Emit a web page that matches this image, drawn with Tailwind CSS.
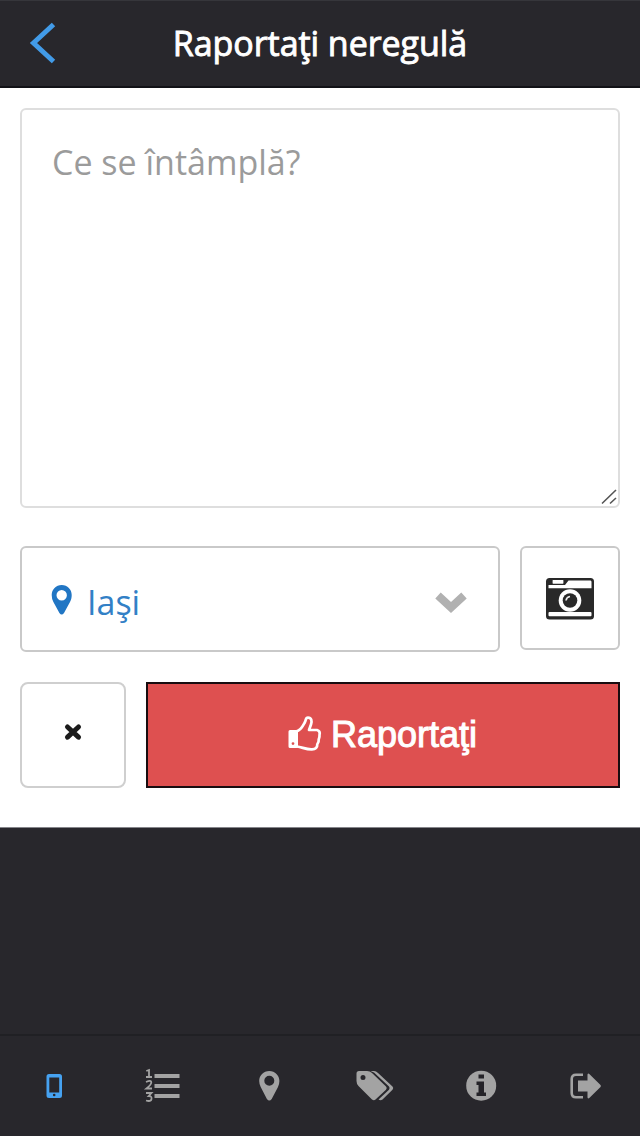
<!DOCTYPE html>
<html lang="en">
<head>
<meta charset="utf-8">
<title>Raportaţi neregulă</title>
<script src="https://cdn.jsdelivr.net/npm/@tailwindcss/browser@4"></script>
</head>
<body class="w-[640px] h-[1136px] overflow-hidden bg-[#28272c] flex flex-col font-['Open_Sans',sans-serif]">
<header class="h-[88px] shrink-0 grid grid-cols-[88px_1fr_88px] items-center border-t border-[#36363b] border-b-2 border-b-[#121217]">
  <svg class="w-[88px] h-[85px]" viewBox="0 1 88 85" fill="none"><path d="M53.5 24.500L33.500 43L53.500 61.500" stroke="#429be8" stroke-width="5"/></svg>
  <h1 class="text-center text-white text-[34px] leading-[85px] font-normal whitespace-nowrap tracking-[-0.05px] [-webkit-text-stroke:0.9px_white]">Raportaţi neregulă</h1>
</header>
<main class="h-[740px] shrink-0 bg-white px-5 pt-5 flex flex-col border-b border-[#85858a]">
  <div class="relative h-[400px] shrink-0 rounded-md border-2 border-[#dedede] px-[30px] pt-[28px] text-[34px] leading-[48px] text-[#9b9b9b]">
    <span class="whitespace-nowrap">Ce se întâmplă?</span>
    <svg class="absolute right-0 bottom-0 w-5 h-5" viewBox="598 486 20 20" stroke="#555" stroke-width="1.600"><path d="M602 503.500L616 490M610 503.500L616 498"/></svg>
  </div>
  <div class="mt-[38px] flex gap-5 items-start">
    <div class="w-[480px] h-[106px] rounded-md border-2 border-[#c9c9c9] flex items-center text-[#3280c6] text-[34px]">
      <svg class="w-[65px] h-[102px] shrink-0" viewBox="22 548 65 102"><path fill="#2176c4" fill-rule="evenodd" d="M61.700 585C67.500 585 71.700 589.500 71.700 595C71.700 598 71 600 70 602L64 613Q61.700 616 59.400 613L53.400 602Q51.700 599 51.700 595C51.700 589.500 56 585 61.700 585ZM61.700 590A5.200 5.200 0 1 0 61.700 600.400A5.200 5.200 0 1 0 61.700 590Z"/></svg>
      <span class="grow leading-[48px] pt-1.5">Iaşi</span>
      <svg class="w-[65px] h-[102px] shrink-0" viewBox="433 548 65 102"><path d="M438 595.500L451 607.500L464 595.500" fill="none" stroke="#b1b1b1" stroke-width="8"/></svg>
    </div>
    <div class="w-[100px] h-[104px] rounded-md border-2 border-[#c9c9c9]">
      <svg class="w-24 h-[100px]" viewBox="522 548 96 100"><rect x="546" y="578" width="48" height="41.500" rx="3.500" fill="#292929"/><path d="M548.500 585H565L568.500 580.500H590.500Q591.500 580.500 591.500 582V588.300H548.500Z" fill="#fff"/><rect x="552" y="579.300" width="12" height="5" rx="1" fill="#fff" stroke="#292929" stroke-width="1.200"/><rect x="548.500" y="612" width="43" height="4.200" rx="1" fill="#fff"/><circle cx="570" cy="600.500" r="11.300" fill="#fff"/><circle cx="570" cy="600.500" r="7.300" fill="#292929"/><path d="M566 600.500Q566.500 597 570 596.500" fill="none" stroke="#eee" stroke-width="1.700"/></svg>
    </div>
  </div>
  <div class="mt-[30px] flex gap-5">
    <div class="w-[106px] h-[106px] rounded-lg border-2 border-[#cfcfcf]">
      <svg class="w-[102px] h-[102px]" viewBox="22 684 102 102"><path d="M67.500 727L78.500 737.200M78.500 727L67.500 737.200" stroke="#1b1b1b" stroke-width="5" stroke-linecap="round"/></svg>
    </div>
    <div class="w-[474px] h-[106px] border-2 border-[#180c10] bg-[#de5050] flex items-center text-white">
      <svg class="w-[183px] h-[102px] shrink-0" viewBox="148 684 183 102"><path fill="#fff" fill-rule="evenodd" d="M290 730H296.500Q298 730 298 731.500V746.500Q298 748 296.500 748H290Q288.500 748 288.500 746.500V731.500Q288.500 730 290 730ZM293 742.200A1.400 1.400 0 1 0 293 745A1.400 1.400 0 1 0 293 742.200Z"/><path d="M296.500 731.300C301 730.500 303 725.500 305 722C306 720 305.500 717.700 308 717.700C311.500 717.700 312.200 721 311 724.500L309 730H317Q320.500 731 319.500 735C319.700 737 319 738.500 318.700 739.500C319 741.500 318.200 743 317.300 744.200C317.500 747.500 315.500 749.400 312 749.400C306 749.700 302 747 297 746.500" fill="none" stroke="#fff" stroke-width="2.700" stroke-linejoin="round"/></svg>
      <span class="font-['Liberation_Sans',sans-serif] text-[36px] leading-[48px] whitespace-nowrap [-webkit-text-stroke:1px_white]">Raportaţi</span>
    </div>
  </div>
</main>
<nav class="mt-auto h-[102px] shrink-0 border-t-2 border-[#202024] flex fill-[#a3a3a3]">
  <svg class="w-[107px] h-[100px]" viewBox="0 1036 107 100"><path fill="#46a2f1" fill-rule="evenodd" d="M49 1074H59.500Q62 1074 62 1076.500V1095.500Q62 1098 59.500 1098H49Q46.500 1098 46.500 1095.500V1076.500Q46.500 1074 49 1074ZM49.300 1077.600V1092.600H59.200V1077.600ZM54.200 1093.700A1.300 1.300 0 1 0 54.200 1096.300A1.300 1.300 0 1 0 54.200 1093.700Z"/></svg>
  <svg class="w-[106px] h-[100px]" viewBox="107 1036 106 100"><path d="M154.500 1074H179.500V1078H154.500ZM154.500 1084H179.500V1088H154.500ZM154.500 1094H179.500V1098H154.500Z"/><path d="M146.300 1071L149 1070V1076.500M146 1077H152M146 1082Q151.500 1079.700 151.300 1082.500Q151 1085 146.500 1088.500H152M146 1093H151.500L148.700 1096Q152 1096 151.500 1099Q151 1102 146 1100.500" fill="none" stroke="#a3a3a3" stroke-width="1.800"/></svg>
  <svg class="w-[107px] h-[100px]" viewBox="213 1036 107 100"><path fill-rule="evenodd" d="M269.300 1071C275 1071 279.400 1075.500 279.400 1081Q279.400 1084 278 1087L271.700 1099Q269.300 1102 266.900 1099L260.700 1087Q259.200 1084 259.200 1081C259.200 1075.500 263.500 1071 269.300 1071ZM269.300 1075.800A5 5 0 1 0 269.300 1085.800A5 5 0 1 0 269.300 1075.800Z"/></svg>
  <svg class="w-[107px] h-[100px]" viewBox="320 1036 107 100"><path fill-rule="evenodd" d="M359 1071H367Q370 1071 372 1073L386 1086.500Q387.500 1088 386 1089.700L375.500 1099.500Q374 1101 372 1099.500L358.500 1086Q356.500 1084 356.500 1081V1073.500Q356.500 1071 359 1071ZM363 1075A2.500 2.500 0 1 0 363 1080A2.500 2.500 0 1 0 363 1075Z"/><path d="M370.500 1071H374Q376 1071 378 1073L392.500 1086.500Q394 1088 392.500 1089.700L382.500 1099.500Q380.500 1101 378.500 1099.500L389 1089.700Q390.200 1088 389 1086.500L374 1072.500Z"/></svg>
  <svg class="w-[106px] h-[100px]" viewBox="427 1036 106 100"><circle cx="481.200" cy="1085.700" r="15"/><path fill="#242328" d="M478.500 1074.500H484V1078.500H478.500ZM476.500 1081.500H484V1092.500H486V1096H476.500V1092.500H478.500V1085H476.500Z"/></svg>
  <svg class="w-[107px] h-[100px]" viewBox="533 1036 107 100"><path d="M583 1074.700H576Q571.700 1074.700 571.700 1079V1093Q571.700 1097.300 576 1097.300H583" fill="none" stroke="#a3a3a3" stroke-width="2.600"/><path d="M578 1080.500H587.500V1074.500Q588 1073 589.300 1074L600.500 1085Q601.300 1086 600.500 1087L589.300 1098Q588 1099 587.500 1097.500V1091.500H578Z"/></svg>
</nav>
</body>
</html>
